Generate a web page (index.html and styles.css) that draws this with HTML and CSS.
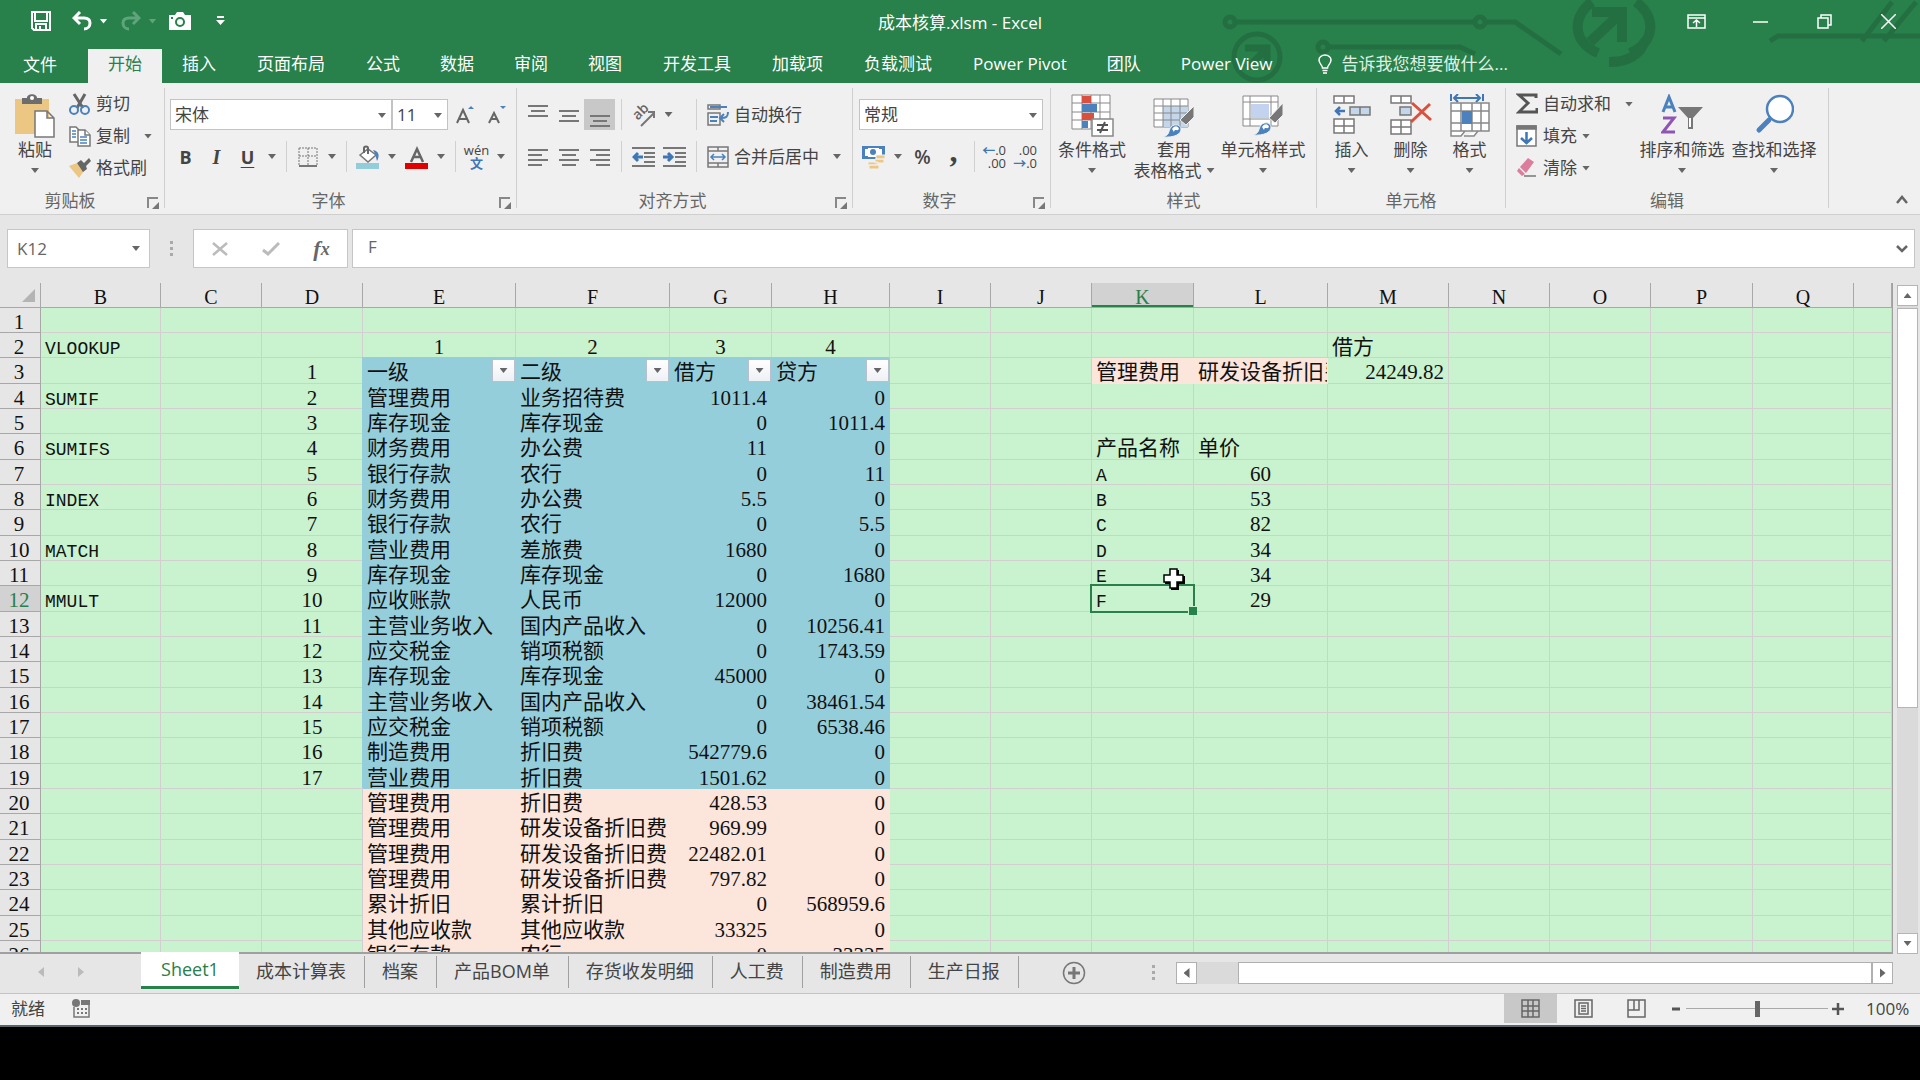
FILE: index.html
```html
<!DOCTYPE html>
<html lang="zh-CN">
<head>
<meta charset="utf-8">
<title>成本核算.xlsm - Excel</title>
<link rel="stylesheet" href="styles.css">
</head>
<body>
<header class="top">
  <svg class="circuit" width="700" height="83" viewBox="0 0 700 83" fill="none" stroke="#236f42" stroke-width="5" aria-hidden="true">
    <circle cx="10" cy="22" r="5"/><path d="M16 22H254M266 22h29l46 32"/><circle cx="260" cy="22" r="5"/>
    <circle cx="37" cy="57" r="23"/><path d="M25 48h22v22M47 48 28 68" stroke-width="7"/>
    <circle cx="103" cy="47" r="5"/><path d="M109 47h131l15 7"/>
    <path d="M372 2c-20 14-20 40 6 51M416 2c20 14 20 40-6 51M389 62c18 0 32-7 36-22" stroke-width="10"/>
    <path d="M372 12h30v30M402 12 370 42" stroke-width="10"/>
    <path d="M550 41l8-5h142M642 41 672 2M664 41 696 2"/>
  </svg>
  <div class="titlebar">
    <div class="quick">
      <button class="qat save" aria-label="保存"><svg width="20" height="20" viewBox="0 0 20 20" fill="none" stroke="#fff" stroke-width="2"><path d="M1 1h18v18H3l-2-2zM4 1v9h12V1M5 19v-6h10v6M9 15v4"/></svg></button>
      <button class="qat" aria-label="撤消"><svg width="20" height="20" viewBox="0 0 20 20" fill="none" stroke="#fff" stroke-width="3"><path d="M8 1 2 7l6 6M2 7h10c4 0 6 2 6 5s-2 6-6 6"/></svg></button>
      <button class="qarrow" aria-label="撤消选项"><i class="arrow"></i></button>
      <button class="qat dim" aria-label="恢复"><svg width="20" height="20" viewBox="0 0 20 20" fill="none" stroke="currentColor" stroke-width="3"><path d="M12 1l6 6-6 6M18 7H8c-4 0-6 2-6 5s2 6 6 6"/></svg></button>
      <button class="qarrow dim" aria-label="恢复选项"><i class="arrow"></i></button>
      <button class="qat camera" aria-label="照相机"><svg width="24" height="18" viewBox="0 0 24 18"><path fill="#fff" d="M1 3h6l2-3h6l2 3h6v15H1z"/><circle cx="12" cy="10" r="4" fill="none" stroke="#28804a" stroke-width="2"/><path fill="#28804a" d="M3 5h2v2H3z"/></svg></button>
      <button class="qat more" aria-label="自定义快速访问工具栏"><svg width="9" height="10" viewBox="0 0 9 10" fill="#fff"><path d="M1 0h7v2H1zM0 4h9L4.500 9z"/></svg></button>
    </div>
    <h1>成本核算.xlsm - Excel</h1>
    <div class="window">
      <button aria-label="功能区显示选项"><svg width="19" height="15" viewBox="0 0 19 15" fill="none" stroke="#fff" stroke-width="1.500"><path d="M1 1h17v13H1zM1 4h17M9.500 13V6M6 9l3.500-3L13 9"/></svg></button>
      <button aria-label="最小化"><svg width="15" height="15" viewBox="0 0 15 15" stroke="#fff" stroke-width="1.500"><path d="M0 8h15"/></svg></button>
      <button aria-label="还原"><svg width="15" height="15" viewBox="0 0 15 15" fill="none" stroke="#fff" stroke-width="1.500"><path d="M1 4h10v10H1zM4 4V1h10v10h-3"/></svg></button>
      <button aria-label="关闭"><svg width="15" height="15" viewBox="0 0 15 15" stroke="#fff" stroke-width="1.500"><path d="M0 0l15 15M15 0 0 15"/></svg></button>
    </div>
  </div>
  <nav class="tabs">
    <button class="file">文件</button><button class="active">开始</button><button>插入</button><button class="wide">页面布局</button><button>公式</button><button>数据</button><button>审阅</button><button>视图</button><button class="wide">开发工具</button><button>加载项</button><button class="wide">负载测试</button><button>Power Pivot</button><button>团队</button><button>Power View</button>
    <label class="tell"><svg width="14" height="20" viewBox="0 0 14 20" fill="none" stroke="#fff" stroke-width="1.500"><path d="M4.500 14c0-3-3.500-4-3.500-8a6 5 0 0 1 12 0c0 4-3.500 5-3.500 8zM4.500 16.500h5M5 19h4"/></svg><input type="text" placeholder="告诉我您想要做什么..." aria-label="告诉我您想要做什么"></label>
  </nav>
</header>

<section class="ribbon">
  <div class="group clipboard">
    <div class="body">
      <button class="big"><svg width="40" height="44" viewBox="0 0 40 44"><path fill="#ecc784" d="M0 5h34v35H0z"/><path fill="#6d6d6d" d="M7 4h5c0-5 10-5 10 0h5v6H7z"/><circle cx="17" cy="4" r="2" fill="#fff"/><path fill="#fff" stroke="#777" stroke-width="1.500" d="M20 17h12l7 7v19H20zM32 17v7h7"/></svg><span>粘贴</span><i class="arrow"></i></button>
      <div class="stack">
        <button class="small"><svg width="22" height="22" viewBox="0 0 22 22" fill="none"><path stroke="#666" stroke-width="3" d="M5 1l9 14M16 1 8 15"/><circle cx="5" cy="17" r="4" stroke="#4b82bd" stroke-width="2"/><circle cx="16" cy="17" r="4" stroke="#4b82bd" stroke-width="2"/></svg><span>剪切</span></button>
        <button class="small"><svg width="22" height="22" viewBox="0 0 22 22" fill="#fff" stroke="#777" stroke-width="1.500"><path d="M1 2h6l3 3v12H1z"/><path stroke="#4b82bd" d="M3 6h4M3 9h4M3 12h4"/><path d="M9 5h7l5 5v11H9z"/><path d="M16 5v5h5"/><path stroke="#4b82bd" d="M11 12h7M11 15h7M11 18h7"/></svg><span>复制</span><i class="arrow far"></i></button>
        <button class="small"><svg width="22" height="22" viewBox="0 0 22 22"><path fill="#ecc784" d="M0 9l8-3 7 8-5 7z"/><path fill="#666" d="M8 6l4-3 3 3 5-5 2 3-5 5 1 3-4 3z"/></svg><span>格式刷</span></button>
      </div>
    </div>
    <footer><span>剪贴板</span><button class="launch" aria-label="剪贴板设置"></button></footer>
  </div>

  <div class="group font">
    <div class="body rows">
      <div class="row">
        <div class="combo name"><select aria-label="字体"><option>宋体</option></select></div><div class="combo size"><select aria-label="字号"><option>11</option></select></div>
        <button class="tool wide first" aria-label="增大字号"><svg width="18" height="20" viewBox="0 0 18 20"><path fill="none" stroke="#666" stroke-width="2" d="M1 18 7 5l6 13M3 14h8"/><path fill="#4b82bd" d="M12 4l3-3 3 3z"/></svg></button>
        <button class="tool" aria-label="减小字号"><svg width="18" height="20" viewBox="0 0 18 20"><path fill="none" stroke="#666" stroke-width="2" d="M1 18 6 8l5 10M3 14h6"/><path fill="#4b82bd" d="M12 1h6l-3 3z"/></svg></button>
      </div>
      <div class="row">
        <button class="tool b">B</button><button class="tool i">I</button><button class="tool u">U</button><button class="drop" aria-label="下划线选项"><i class="arrow"></i></button><i class="sep"></i>
        <button class="tool" aria-label="边框"><svg width="20" height="20" viewBox="0 0 20 20" fill="none" stroke="#777"><path stroke-dasharray="2 1" d="M1 1h18v17M1 1v17M10 1v17M1 9h18"/><path stroke-width="2" d="M1 19h18"/></svg></button><button class="drop" aria-label="边框选项"><i class="arrow"></i></button><i class="sep"></i>
        <button class="tool" aria-label="填充颜色"><svg width="24" height="24" viewBox="0 0 24 24"><path fill="#92cddc" d="M0 18h23v6H0z"/><path fill="#fff" stroke="#777" stroke-width="1.500" d="M4 10l8-6 8 6-8 7z"/><path fill="none" stroke="#666" stroke-width="2" d="M8 8V3c0-2 4-2 4 0v6"/><path fill="#4b82bd" d="M17 5c6 1 7 6 4 11-1-3-1-6-4-11z"/></svg></button><button class="drop" aria-label="填充颜色选项"><i class="arrow"></i></button>
        <button class="tool" aria-label="字体颜色"><svg width="24" height="24" viewBox="0 0 24 24"><path fill="#e00000" d="M0 18h23v6H0z"/><path fill="none" stroke="#666" stroke-width="2.500" d="M6 17 12 4l6 13M8 12h8"/></svg></button><button class="drop" aria-label="字体颜色选项"><i class="arrow"></i></button><i class="sep"></i>
        <button class="tool pinyin" aria-label="拼音"><span>wén</span><b>文</b></button><button class="drop" aria-label="拼音选项"><i class="arrow"></i></button>
      </div>
    </div>
    <footer><span>字体</span><button class="launch" aria-label="字体设置"></button></footer>
  </div>

  <div class="group align">
    <div class="body rows">
      <div class="row">
        <button class="tool" aria-label="顶端对齐"><svg width="20" height="24" viewBox="0 0 20 24" stroke="#777" stroke-width="2"><path d="M0 3h20M3 8h14M0 13h20"/></svg></button><button class="tool" aria-label="垂直居中"><svg width="20" height="24" viewBox="0 0 20 24" stroke="#777" stroke-width="2"><path d="M0 8h20M3 13h14M0 18h20"/></svg></button><button class="tool on" aria-label="底端对齐"><svg width="20" height="24" viewBox="0 0 20 24" stroke="#777" stroke-width="2"><path d="M0 13h20M3 18h14M0 23h20"/></svg></button><i class="sep"></i>
        <button class="tool" aria-label="方向"><svg width="24" height="24" viewBox="0 0 24 24"><text x="0" y="4" text-anchor="middle" transform="translate(9 9) rotate(-45)" font-family="Open Sans" font-size="14" font-weight="600" fill="#666">ab</text><path fill="none" stroke="#777" stroke-width="2" d="M9 23 22 10M16 9h6v6"/></svg></button><button class="drop last" aria-label="方向选项"><i class="arrow"></i></button><i class="sep"></i>
        <button class="small"><svg width="22" height="22" viewBox="0 0 22 22" fill="none" stroke="#777" stroke-width="1.500"><path d="M1 1h12v4H1zM1 9h12v12H1z"/><path stroke="#4b82bd" stroke-width="2" d="M3 3h17M3 13h8M3 17h7M21 8c0 5-2 6-7 6M17 10l-4 4 4 4"/></svg><span>自动换行</span></button>
      </div>
      <div class="row">
        <button class="tool" aria-label="左对齐"><svg width="20" height="20" viewBox="0 0 20 20" stroke="#777" stroke-width="2"><path d="M0 3h20M0 8h14M0 13h20M0 18h14"/></svg></button><button class="tool" aria-label="居中"><svg width="20" height="20" viewBox="0 0 20 20" stroke="#777" stroke-width="2"><path d="M0 3h20M3 8h14M0 13h20M3 18h14"/></svg></button><button class="tool" aria-label="右对齐"><svg width="20" height="20" viewBox="0 0 20 20" stroke="#777" stroke-width="2"><path d="M0 3h20M6 8h14M0 13h20M6 18h14"/></svg></button><i class="sep"></i>
        <button class="tool" aria-label="减少缩进量"><svg width="23" height="22" viewBox="0 0 23 22" fill="none" stroke="#777" stroke-width="2"><path d="M0 2h23M12 7h11M12 11h11M12 16h11M0 20h23"/><path stroke="#3f76b5" stroke-width="3" d="M11 11H2M6 7l-4 4 4 4"/></svg></button><button class="tool" aria-label="增加缩进量"><svg width="23" height="22" viewBox="0 0 23 22" fill="none" stroke="#777" stroke-width="2"><path d="M0 2h23M12 7h11M12 11h11M12 16h11M0 20h23"/><path stroke="#3f76b5" stroke-width="3" d="M0 11h9M5 7l4 4-4 4"/></svg></button><i class="sep"></i>
        <button class="small"><svg width="22" height="22" viewBox="0 0 22 22" fill="none" stroke="#777" stroke-width="1.500"><path d="M1 1h20v20H1zM1 5h20M1 17h20M11 1v4M11 17v4"/><path stroke="#4b82bd" d="M4 11h14M7 8l-3 3 3 3M15 8l3 3-3 3"/></svg><span>合并后居中</span><i class="arrow far"></i></button>
      </div>
    </div>
    <footer><span>对齐方式</span><button class="launch" aria-label="对齐设置"></button></footer>
  </div>

  <div class="group number">
    <div class="body rows">
      <div class="row"><div class="combo format"><select aria-label="数字格式"><option>常规</option></select></div></div>
      <div class="row">
        <button class="tool" aria-label="会计数字格式"><svg width="24" height="24" viewBox="0 0 24 24"><path fill="#4b82bd" d="M0 1h23v13H0z"/><path fill="#fff" d="M3 4h3V3h11v1h3v7h-3v1H6v-1H3z"/><circle cx="11" cy="7" r="3" fill="#4b82bd"/><path fill="#ecc784" stroke="#f0f0f0" d="M14 10h9v4h-9zM13 14h9v4h-9zM6 17h10v3H6zM7 20h10v4H7z"/></svg></button><button class="drop" aria-label="会计格式选项"><i class="arrow"></i></button>
        <button class="tool pct">%</button><button class="tool comma">,</button><i class="sep"></i>
        <button class="tool dec"><span><em>←</em>.0</span><span>.00</span></button><button class="tool dec"><span>.00</span><span><em>→</em>.0</span></button>
      </div>
    </div>
    <footer><span>数字</span><button class="launch" aria-label="数字设置"></button></footer>
  </div>

  <div class="group styles">
    <div class="body">
      <button class="big w72"><svg width="43" height="44" viewBox="0 0 43 44" fill="#fff" stroke="#888"><path d="M1 1h38v34H1zM1 9h38M1 18h38M1 26h38M11 1v34M20 1v34M29 1v34"/><path fill="#d9503f" stroke="none" d="M11 2h9v7h-9zM11 19h12v7H11z"/><path fill="#4b82bd" stroke="none" d="M11 10h15v8H11zM11 27h6v7h-6z"/><path stroke-width="1.500" d="M21 25h21v17H21z"/><path stroke="#555" stroke-width="2" d="M26 31h11M26 36h11M34 28l-5 11"/></svg><span>条件格式</span><i class="arrow"></i></button>
      <button class="big w92"><svg width="42" height="44" viewBox="0 0 42 44" fill="#fff" stroke="#888"><path d="M1 5h34v28H1z"/><path fill="#c3d6ea" stroke="none" d="M10 12h25v21H10z"/><path fill="none" d="M1 12h34M1 19h34M1 26h34M10 5v28M18 5v28M27 5v28"/><path fill="#777" stroke="#f0f0f0" d="M41 12v11l-8 8-6-5z"/><path fill="#4b82bd" stroke="#f0f0f0" d="M9 43c8-1 6-6 9-10 4-4 10-2 10 2 0 5-6 9-19 8z"/><path fill="#fff" stroke="none" d="M19 35c3-4 6-3 7 0-2 3-4-1-5 3z"/></svg><span>套用</span><span class="line2">表格格式<i class="arrow"></i></span></button>
      <button class="big w86"><svg width="42" height="44" viewBox="0 0 42 44" fill="#fff" stroke="#888"><path d="M1 2h35v30H1zM8 2v30M29 2v30M1 8h35M1 25h35"/><path fill="#c3d2ee" stroke="none" d="M9 10h18v14H9z"/><path fill="#777" stroke="#f0f0f0" d="M41 9v12l-8 8-6-5z"/><path fill="#4b82bd" stroke="#f0f0f0" d="M10 41c8-1 6-6 9-10 4-4 10-2 10 2 0 5-6 9-19 8z"/><path fill="#fff" stroke="none" d="M20 33c3-4 6-3 7 0-2 3-4-1-5 3z"/></svg><span>单元格样式</span><i class="arrow"></i></button>
    </div>
    <footer><span>样式</span></footer>
  </div>

  <div class="group cells">
    <div class="body">
      <button class="big w59"><svg width="38" height="44" viewBox="0 0 38 44" fill="#fff" stroke="#777" stroke-width="1.500"><path d="M1 2h20v7H1zM11 2v7M1 25h20v14H1zM11 25v14M1 32h20"/><path fill="#c3d6ea" d="M17 13h20v8H17zM27 13v8"/><path fill="none" stroke="#3f76b5" stroke-width="2.500" d="M12 17H3M7 13l-4 4 4 4"/></svg><span>插入</span><i class="arrow"></i></button>
      <button class="big w59"><svg width="42" height="44" viewBox="0 0 42 44" fill="#fff" stroke="#777" stroke-width="1.500"><path d="M1 2h20v7H1zM11 2v7M1 26h20v14H1zM11 26v14M1 33h20"/><path fill="#c3d6ea" d="M10 13h11v8H10z"/><path fill="none" stroke="#d9503f" stroke-width="3" d="M22 9l19 17M40 10 21 28"/></svg><span>删除</span><i class="arrow"></i></button>
      <button class="big w59"><svg width="40" height="44" viewBox="0 0 40 44" fill="#fff" stroke="#888"><path stroke="#3f76b5" stroke-width="2" fill="none" d="M1 0v7M33 0v7M4 4h26M8 0 4 4l4 4M26 0l4 4-4 4"/><path stroke-width="1.500" d="M1 9h38v28H1zM11 9v28M22 9v28M31 9v28M1 17h38M1 29h38M1 37v5h10l4-5M14 42h10l4-5"/><path fill="#4b82bd" stroke="none" d="M12 17h10v13H12z"/></svg><span>格式</span><i class="arrow"></i></button>
    </div>
    <footer><span>单元格</span></footer>
  </div>

  <div class="group edit">
    <div class="body">
      <div class="stack">
        <button class="small"><svg width="22" height="22" viewBox="0 0 22 22" fill="none" stroke="#555" stroke-width="3"><path d="M20 5V2H3l9 8-9 9h18v-4"/></svg><span>自动求和</span><i class="arrow far"></i></button>
        <button class="small"><svg width="22" height="22" viewBox="0 0 22 22" fill="#fff" stroke="#777" stroke-width="1.500"><path d="M1 1h19v20H1z"/><path fill="#777" d="M1 1h19v3H1z"/><path fill="none" stroke="#3f76b5" stroke-width="2.500" d="M10.500 7v11M5 13l5.500 5 5.500-5"/></svg><span>填充</span><i class="arrow near"></i></button>
        <button class="small"><svg width="22" height="22" viewBox="0 0 22 22"><path fill="#dd7d9c" d="M12 1l6 4-8 11-6-6zM3 11l6 6-3 2-5-5z"/><path stroke="#777" stroke-width="1.500" d="M8 19h12"/></svg><span>清除</span><i class="arrow near"></i></button>
      </div>
      <button class="big w92"><svg width="42" height="44" viewBox="0 0 42 44" fill="none" stroke-width="3"><path stroke="#4b82bd" d="M2 18 8 3l6 15M4 13h8"/><path stroke="#8f55b5" d="M2 24h11L2 38h12"/><path fill="#777" d="M17 13h25L32 24v11h-5V24z"/><path stroke="#fff" stroke-width="2" d="M29 24v9"/></svg><span>排序和筛选</span><i class="arrow"></i></button>
      <button class="big w92"><svg width="40" height="44" viewBox="0 0 40 44"><circle cx="26" cy="15" r="13" fill="#fff" stroke="#4b82bd" stroke-width="2.500"/><path stroke="#4b82bd" stroke-width="5" stroke-linecap="round" d="M15 26 5 36"/></svg><span>查找和选择</span><i class="arrow"></i></button>
    </div>
    <footer><span>编辑</span></footer>
  </div>
  <button class="collapse" aria-label="折叠功能区"><svg width="12" height="9" viewBox="0 0 12 9" fill="none" stroke="#666" stroke-width="2.500"><path d="M1 8l5-6 5 6"/></svg></button>
</section>

<section class="formula">
  <div class="namebox"><input type="text" value="K12" aria-label="名称框"><button aria-label="名称列表"><i class="arrow"></i></button></div>
  <i class="dots"></i>
  <div class="fx">
    <button aria-label="取消"><svg width="16" height="14" viewBox="0 0 16 14" stroke="#bbb" stroke-width="2.500"><path d="M1 1l14 12M15 1 1 13"/></svg></button>
    <button aria-label="输入"><svg width="18" height="14" viewBox="0 0 18 14" fill="none" stroke="#bbb" stroke-width="3"><path d="M1 8l5 4L17 1"/></svg></button>
    <button class="fn" aria-label="插入函数"><i>f</i><sub>x</sub></button>
  </div>
  <div class="entry"><input type="text" value="F" aria-label="编辑栏"><button aria-label="展开编辑栏"><svg width="12" height="8" viewBox="0 0 12 8" fill="none" stroke="#666" stroke-width="2.500"><path d="M1 1l5 5 5-5"/></svg></button></div>
</section>

<main class="sheet">
  <div class="gridwrap">
    <table class="grid"><colgroup><col class="c41"><col class="c120"><col class="c101"><col class="c101"><col class="c153"><col class="c154"><col class="c102"><col class="c118"><col class="c101"><col class="c101"><col class="c102"><col class="c134"><col class="c121"><col class="c101"><col class="c101"><col class="c102"><col class="c101"><col></colgroup><thead></thead><tbody></tbody></table>
  </div>
  <div class="vscroll"><button aria-label="向上滚动"><i class="arrow up"></i></button><div class="track"><div class="thumb"></div></div><button aria-label="向下滚动"><i class="arrow"></i></button></div>
</main>

<section class="sheets">
  <div class="nav"><button aria-label="上一张工作表"><i class="arrow left"></i></button><button aria-label="下一张工作表"><i class="arrow right"></i></button></div>
  <nav class="sheettabs"><button class="active">Sheet1</button><button>成本计算表</button><button>档案</button><button>产品BOM单</button><button>存货收发明细</button><button>人工费</button><button>制造费用</button><button>生产日报</button></nav>
  <button class="add" aria-label="新工作表"><svg width="24" height="24" viewBox="0 0 24 24" fill="none" stroke="#777" stroke-width="1.500"><circle cx="12" cy="12" r="10.500"/><path stroke-width="3" d="M12 6v12M6 12h12"/></svg></button>
  <i class="dots"></i>
  <div class="hscroll"><button aria-label="向左滚动"><i class="arrow left"></i></button><div class="track"><div class="thumb"></div></div><button aria-label="向右滚动"><i class="arrow right"></i></button></div>
</section>

<footer class="status">
  <span>就绪</span>
  <button class="macro" aria-label="录制宏"><svg width="18" height="19" viewBox="0 0 18 19"><path fill="none" stroke="#777" stroke-width="1.500" d="M2 8v10h15V5"/><path fill="#777" d="M9 1h9v5H9zM5 9h2v2H5zM9 9h2v2H9zM13 9h2v2h-2zM5 13h2v2H5zM9 13h2v2H9zM13 13h2v2h-2z"/><circle cx="4" cy="4" r="4" fill="#777"/></svg></button>
  <div class="views">
    <button class="on" aria-label="普通"><svg width="19" height="19" viewBox="0 0 19 19" fill="none" stroke="#666" stroke-width="1.500"><path d="M1 1h17v17H1zM1 7h17M1 12h17M7 1v17M12 1v17"/></svg></button>
    <button aria-label="页面布局视图"><svg width="19" height="19" viewBox="0 0 19 19" fill="none" stroke="#666" stroke-width="1.500"><path d="M1 1h17v17H1zM5 4h9v11H5zM7 7h5M7 9.500h5M7 12h5"/></svg></button>
    <button aria-label="分页预览"><svg width="19" height="19" viewBox="0 0 19 19" fill="none" stroke="#666" stroke-width="1.500"><path d="M1 1h17v17H1zM1 11h11V1M7 1v10"/></svg></button>
  </div>
  <div class="zoom"><button aria-label="缩小"><svg width="10" height="10" viewBox="0 0 10 10" stroke="#555" stroke-width="3"><path d="M1 5h8"/></svg></button><input type="range" min="0" max="100" value="50" aria-label="显示比例"><button aria-label="放大"><svg width="12" height="12" viewBox="0 0 12 12" stroke="#555" stroke-width="2.500"><path d="M0 6h12M6 0v12"/></svg></button></div>
  <output>100%</output>
</footer>
<div class="below"></div>
<script src="sheet.js"></script>
</body>
</html>
```
FILE: styles.css
```css
* { box-sizing: border-box; }
body { margin: 0; height: 100vh; display: flex; flex-direction: column; overflow: hidden; background: #e6e6e6; color: #444; font: 17px/22px "Open Sans", "Noto Sans CJK SC", sans-serif; }
button, input, select { font: inherit; color: inherit; }
button { border: 0; padding: 0; margin: 0; background: none; display: flex; align-items: center; justify-content: center; white-space: nowrap; }
svg { display: block; flex: none; }
.arrow { flex: none; width: 8px; height: 5px; background: currentColor; clip-path: polygon(0 0, 100% 0, 50% 100%); color: #666; }
.arrow.up { clip-path: polygon(0 100%, 100% 100%, 50% 0); }
.arrow.left { width: 6px; height: 10px; clip-path: polygon(100% 0, 100% 100%, 0 50%); }
.arrow.right { width: 6px; height: 10px; clip-path: polygon(0 0, 100% 50%, 0 100%); }

/* title bar and ribbon tabs */
.top { position: relative; flex: none; background: #28804a; color: #fff; }
.circuit { position: absolute; top: 0; right: 0; }
.titlebar { position: relative; display: grid; grid-template-columns: 1fr auto 1fr; height: 49px; }
.titlebar h1 { margin: 0; font-size: 17px; font-weight: 400; line-height: 46px; }
.quick { display: flex; align-items: center; height: 42px; padding-left: 31px; }
.qat { width: 20px; }
.save { margin-right: 21px; }
.qarrow { width: 29px; padding-right: 6px; }
.qarrow .arrow { color: inherit; }
.dim { color: #5fa47a; }
.camera { width: 24px; margin: 0 18px 0 -2px; }
.window { display: flex; justify-content: flex-end; height: 42px; }
.window button { width: 64px; }
.tabs { position: relative; display: flex; height: 34px; line-height: 30px; }
.tabs button { padding: 0 20px 4px; font-size: 17px; }
.tabs button.wide { padding: 0 21px 4px; }
.tabs .file { width: 88px; padding: 0 8px 2px 0; }
.tabs .active { background: #f0f0f0; color: #28804a; }
.tell { display: flex; align-items: center; gap: 10px; padding: 0 0 4px 25px; }
.tell input { width: 190px; height: 28px; padding: 0; border: 0; background: none; outline: 0; }
.tell input::placeholder { color: #e0f0e4; opacity: 1; }

/* ribbon */
.ribbon { position: relative; flex: none; display: flex; height: 132px; background: #f0f0f0; border-bottom: 1px solid #cfcfcf; padding: 5px 0 6px; }
.group { flex: none; display: flex; flex-direction: column; border-right: 1px solid #cfcfcf; }
.body { display: flex; height: 100px; padding: 0 0 0 5px; }
.rows { flex-direction: column; gap: 11px; padding-top: 11px; }
.row { display: flex; height: 31px; }
.group footer { display: flex; height: 20px; line-height: 26px; text-align: center; color: #666; }
.group footer span { flex: 1; }
.launch { position: relative; width: 24px; height: 28px; }
.launch::before { content: ""; width: 9px; height: 9px; border: solid #888; border-width: 2px 0 0 2px; }
.launch::after { content: ""; position: absolute; right: 5px; bottom: 7px; width: 7px; height: 7px; background: #777; clip-path: polygon(100% 0, 100% 100%, 0 100%); }
.clipboard { width: 165px; }
.clipboard .body { padding-left: 8px; }
.font { width: 352px; }
.align { width: 336px; }
.number { width: 198px; }
.styles { width: 266px; }
.cells { width: 189px; }
.edit { width: 323px; }
.big { flex-direction: column; justify-content: flex-start; width: 54px; height: 100px; line-height: 21px; }
.big > svg { margin: 6px 0 1px; }
.big > .arrow { margin-top: 8px; }
.w59 { width: 59px; }
.w72 { width: 72px; }
.w86 { width: 86px; }
.w92 { width: 92px; }
.line2 { display: flex; align-items: center; gap: 5px; }
.stack { display: flex; flex-direction: column; padding-left: 7px; }
.small { height: 32px; gap: 5px; justify-content: flex-start; }
.row .small { height: 31px; padding-left: 4px; }
.far { margin-left: 9px; }
.edit .stack { width: 125px; padding-left: 5px; }
.combo { position: relative; height: 31px; }
.combo select { width: 100%; height: 31px; appearance: none; padding: 0 4px; border: 1px solid #c3c3c3; border-radius: 0; background: #fff; }
.combo::after { content: ""; position: absolute; right: 6px; top: 14px; width: 8px; height: 5px; background: #666; clip-path: polygon(0 0, 100% 0, 50% 100%); }
.name { width: 222px; }
.size { width: 56px; }
.format { width: 184px; margin-left: 1px; }
.tool { width: 31px; }
.tool.wide { width: 33px; }
.tool.on { background: #c8c8c8; }
.drop { width: 18px; }
.drop.last { width: 31px; padding-right: 12px; }
.sep { flex: none; width: 1px; background: #d0d0d0; margin: 0 5px; }
.align .sep { margin: 0 6px; }
.b, .u { font-weight: 700; font-size: 18px; }
.u { text-decoration: underline; text-underline-offset: 3px; }
.i { font: italic 700 20px/24px "Liberation Serif", serif; }
.pinyin { flex-direction: column; font-size: 13px; line-height: 13px; }
.pinyin b { color: #3f76b5; font-size: 13px; }
.pct { font-size: 19px; font-weight: 600; }
.comma { font: 700 32px/20px "Liberation Serif", serif; padding-bottom: 12px; }
.dec { flex-direction: column; align-items: flex-end; padding-right: 5px; font-size: 13px; line-height: 13px; }
.dec em { color: #3f76b5; font-style: normal; font-weight: 700; }
.collapse { margin: auto 12px 4px auto; }

/* formula bar */
.formula { flex: none; display: flex; height: 68px; padding: 14px 5px 14px 7px; }
.namebox, .fx, .entry { display: flex; height: 39px; background: #fff; border: 1px solid #c6c6c6; }
.namebox { width: 143px; }
.formula input { flex: 1; min-width: 0; border: 0; outline: 0; padding: 0 9px; font-size: 17px; background: none; color: #666; }
.formula .entry input { padding: 0 15px 4px; }
.namebox button { width: 26px; }
.dots { flex: none; width: 3px; height: 15px; margin: 12px 20px; background: repeating-linear-gradient(#aaa 0 3px, transparent 3px 6px); }
.fx { width: 155px; margin-right: 4px; }
.fx button { flex: 1; }
.fn { font: 700 22px/24px "Liberation Serif", serif; color: #666; }
.fn sub { font-size: 18px; font-style: italic; }
.entry { flex: 1; }
.entry button { width: 24px; }

/* worksheet */
.sheet { flex: 1; min-height: 0; display: flex; }
.gridwrap { flex: 1; min-width: 0; overflow: hidden; border: solid #a0a0a0; border-width: 0 1px 2px 0; }
.grid { width: 100%; table-layout: fixed; border-collapse: separate; border-spacing: 0; font: 21px/20px "Liberation Serif", "Noto Sans CJK SC", serif; color: #111; }
.c41 { width: 41px; } .c101 { width: 101px; } .c102 { width: 102px; } .c118 { width: 118px; } .c120 { width: 120px; } .c121 { width: 121px; } .c134 { width: 134px; } .c153 { width: 153px; } .c154 { width: 154px; }
.grid th, .grid td { position: relative; height: 25px; padding: 4px 4px 0; border: solid #d3cfd1; border-width: 0 1px 1px 0; vertical-align: top; white-space: nowrap; }
.grid tbody tr:nth-child(3n) > * { height: 26px; }
.grid th { background: #e6e6e6; border-color: #a8a8a8; font-weight: 400; text-align: center; }
.grid thead th { font-size: 20px; }
.grid tbody th { padding-right: 6px; }
.grid td { background: #c9f2cf; overflow: hidden; text-align: left; }
.grid td.r { text-align: right; }
.grid td.c { text-align: center; }
.grid .latin { font-family: "Liberation Mono", monospace; font-size: 18px; line-height: 0; }
.grid td.blue { background: #95cedb; border-color: #95cedb; box-shadow: -1px -1px 0 #95cedb; }
.grid td.peach { background: #fce5db; border-color: #fce5db; }
.grid th.sel { background: #d2d2d2; color: #28804a; }
.grid thead th.sel { padding-bottom: 0; box-shadow: inset 0 -2px 0 #28804a; }
.grid thead th:first-child::after { content: ""; position: absolute; right: 5px; bottom: 5px; width: 13px; height: 13px; background: #b4b4b4; clip-path: polygon(100% 0, 100% 100%, 0 100%); }
.grid td.current, .grid td.hover { overflow: visible; }
.grid td.current { z-index: 1; }
.grid td.current::before { content: ""; position: absolute; inset: -2px; border: 2px solid #28804a; }
.grid td.current::after { content: ""; position: absolute; right: -4px; bottom: -4px; width: 8px; height: 8px; background: #28804a; border: solid #c9f2cf; border-width: 1px 0 0 1px; }
.pointer { position: absolute; left: 71px; top: 7px; z-index: 2; }
.filter { position: absolute; top: 1px; right: 0; width: 23px; height: 23px; background: linear-gradient(#fff, #eef0f4); border: 1px solid #b9bfcc; }
.vscroll { display: flex; flex-direction: column; width: 27px; padding: 2px 2px 0 4px; }
.vscroll button { flex: none; height: 21px; background: #fff; border: 1px solid #b5b5b5; }
.vscroll .track { flex: 1; background: #dadada; padding-top: 2px; }
.vscroll .thumb { height: 64%; background: #fff; border: 1px solid #b5b5b5; }

/* sheet tabs */
.sheets { flex: none; display: flex; align-items: flex-start; height: 39px; padding-right: 27px; }
.nav { display: flex; width: 141px; height: 36px; padding-left: 21px; }
.nav button { width: 40px; }
.nav .arrow { color: #bbb; }
.sheettabs { display: flex; font-size: 18px; }
.sheettabs button { height: 32px; padding: 0 18px 2px 17px; margin-top: 2px; border-right: 1px solid #a0a0a0; }
.sheettabs .active { position: relative; width: 98px; height: 37px; margin-top: -2px; padding: 0; background: #fff; color: #28804a; border: solid #28804a; border-width: 0 0 3px; }
.add { height: 38px; width: 24px; margin-left: 43px; }
.sheets .dots { margin: 11px 21px 0 auto; }
.hscroll { flex: 0 1 717px; display: flex; height: 22px; margin-top: 8px; }
.hscroll button { flex: none; width: 21px; background: #fff; border: 1px solid #b0b0b0; }
.hscroll .track { flex: 1; display: flex; justify-content: flex-end; background: #dadada; }
.hscroll .thumb { width: 94%; background: #fff; border: 1px solid #b0b0b0; }

/* status bar */
.status { flex: none; display: flex; align-items: center; height: 32px; padding: 0 0 2px 11px; background: #f0f0f0; border-top: 1px solid #c4c4c4; font-size: 17px; }
.macro { margin-left: 27px; }
.views { display: flex; align-self: stretch; margin-left: auto; }
.views button { width: 53px; }
.views .on { background: #c8c8c8; }
.zoom { display: flex; align-items: center; margin-left: 3px; }
.zoom button { width: 20px; }
.zoom input { width: 142px; height: 20px; margin: 0; appearance: none; background: linear-gradient(#aaa, #aaa) center / 100% 1px no-repeat; }
.zoom input::-webkit-slider-thumb { appearance: none; width: 5px; height: 16px; background: #666; }
.status output { width: 72px; padding-left: 18px; }
.below { flex: none; height: 55px; background: #000; border-top: 2px solid #59616b; }
```
FILE: sheet.js
```js
const columns = 'BCDEFGHIJKLMNOPQR'.split('');
const entries = [
  ['管理费用', '业务招待费', '1011.4', '0'],
  ['库存现金', '库存现金', '0', '1011.4'],
  ['财务费用', '办公费', '11', '0'],
  ['银行存款', '农行', '0', '11'],
  ['财务费用', '办公费', '5.5', '0'],
  ['银行存款', '农行', '0', '5.5'],
  ['营业费用', '差旅费', '1680', '0'],
  ['库存现金', '库存现金', '0', '1680'],
  ['应收账款', '人民币', '12000', '0'],
  ['主营业务收入', '国内产品收入', '0', '10256.41'],
  ['应交税金', '销项税额', '0', '1743.59'],
  ['库存现金', '库存现金', '45000', '0'],
  ['主营业务收入', '国内产品收入', '0', '38461.54'],
  ['应交税金', '销项税额', '0', '6538.46'],
  ['制造费用', '折旧费', '542779.6', '0'],
  ['营业费用', '折旧费', '1501.62', '0'],
  ['管理费用', '折旧费', '428.53', '0'],
  ['管理费用', '研发设备折旧费', '969.99', '0'],
  ['管理费用', '研发设备折旧费', '22482.01', '0'],
  ['管理费用', '研发设备折旧费', '797.82', '0'],
  ['累计折旧', '累计折旧', '0', '568959.6'],
  ['其他应收款', '其他应收款', '33325', '0'],
  ['银行存款', '农行', '0', '33325']
];
const cells = {
  B2: 'VLOOKUP', B4: 'SUMIF', B6: 'SUMIFS', B8: 'INDEX', B10: 'MATCH', B12: 'MMULT',
  E2: '1', F2: '2', G2: '3', H2: '4', E3: '一级', F3: '二级', G3: '借方', H3: '贷方',
  M2: '借方', K3: '管理费用', L3: '研发设备折旧费', M3: '24249.82', K6: '产品名称', L6: '单价',
  K7: 'A', K8: 'B', K9: 'C', K10: 'D', K11: 'E', K12: 'F',
  L7: '60', L8: '53', L9: '82', L10: '34', L11: '34', L12: '29'
};
for (let n = 1; n <= 17; n++) cells['D' + (n + 2)] = String(n);
entries.forEach((entry, i) => entry.forEach((value, j) => { cells['EFGH'[j] + (i + 4)] = value; }));

const pointer = '<svg class="pointer" width="22" height="22" viewBox="0 0 22 22"><path d="M8 2h8v6h6v8h-6v6H8v-6H2V8h6z"/><path fill="#fff" stroke="#000" stroke-width="1.500" d="M7 1h7v6h6v7h-6v6H7v-6H1V7h6z"/></svg>';

function cell(col, row) {
  const value = cells[col + row] || '';
  const inData = 'EFGH'.includes(col);
  const classes = [];
  if (inData && row >= 3) classes.push(row < 20 ? 'blue' : 'peach');
  if (row === 3 && (col === 'K' || col === 'L')) classes.push('peach');
  if (/^[\d.]+$/.test(value)) classes.push(col === 'D' || col === 'L' || row === 2 ? 'c' : 'r');
  if (col + row === 'K12') classes.push('current');
  if (col + row === 'K11') classes.push('hover');
  let content = /^[A-Z]+$/.test(value) ? `<span class="latin">${value}</span>` : value;
  if (row === 3 && inData) content += '<button class="filter" aria-label="筛选"><i class="arrow"></i></button>';
  if (col + row === 'K11') content += pointer;
  return `<td class="${classes.join(' ')}">${content}</td>`;
}

document.querySelector('.grid thead').innerHTML =
  '<tr><th></th>' + columns.map(c => `<th${c === 'K' ? ' class="sel"' : ''}>${c === 'R' ? '' : c}</th>`).join('') + '</tr>';
let html = '';
for (let row = 1; row <= 26; row++) {
  html += `<tr><th${row === 12 ? ' class="sel"' : ''}>${row}</th>${columns.map(c => cell(c, row)).join('')}</tr>`;
}
document.querySelector('.grid tbody').innerHTML = html;
```
